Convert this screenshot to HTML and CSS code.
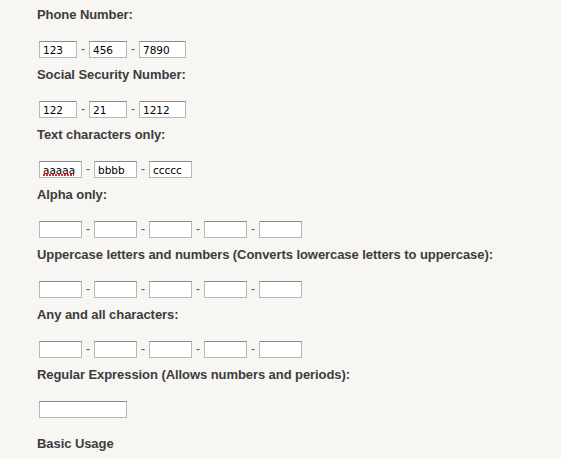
FILE: index.html
```html
<!DOCTYPE html>
<html>
<head>
<meta charset="utf-8">
<link rel="stylesheet" href="styles.css">
</head>
<body>
<div class="page">
  <div class="field">
    <label class="label">Phone Number:</label>
    <div class="row">
      <input class="box w38" value="123"><span class="dash">-</span><input class="box w38" value="456"><span class="dash">-</span><input class="box w47" value="7890">
    </div>
  </div>
  <div class="field">
    <label class="label">Social Security Number:</label>
    <div class="row">
      <input class="box w38" value="122"><span class="dash">-</span><input class="box w38" value="21"><span class="dash">-</span><input class="box w47" value="1212">
    </div>
  </div>
  <div class="field">
    <label class="label">Text characters only:</label>
    <div class="row">
      <input class="box w43 misspelt" value="aaaaa"><span class="dash">-</span><input class="box w43" value="bbbb"><span class="dash">-</span><input class="box w43" value="ccccc">
    </div>
  </div>
  <div class="field">
    <label class="label">Alpha only:</label>
    <div class="row">
      <input class="box w43"><span class="dash">-</span><input class="box w43"><span class="dash">-</span><input class="box w43"><span class="dash">-</span><input class="box w43"><span class="dash">-</span><input class="box w43">
    </div>
  </div>
  <div class="field">
    <label class="label">Uppercase letters and numbers (Converts lowercase letters to uppercase):</label>
    <div class="row">
      <input class="box w43"><span class="dash">-</span><input class="box w43"><span class="dash">-</span><input class="box w43"><span class="dash">-</span><input class="box w43"><span class="dash">-</span><input class="box w43">
    </div>
  </div>
  <div class="field">
    <label class="label">Any and all characters:</label>
    <div class="row">
      <input class="box w43"><span class="dash">-</span><input class="box w43"><span class="dash">-</span><input class="box w43"><span class="dash">-</span><input class="box w43"><span class="dash">-</span><input class="box w43">
    </div>
  </div>
  <div class="field">
    <label class="label">Regular Expression (Allows numbers and periods):</label>
    <div class="row">
      <input class="box w88">
    </div>
  </div>
  <h3 class="heading">Basic Usage</h3>
</div>
</body>
</html>
```

FILE: styles.css
```css
html, body {
  margin: 0;
  padding: 0;
  background: #f7f6f3;
}

.page {
  padding: 7px 0 0 37px;
  display: flex;
  flex-direction: column;
  font-family: "Liberation Sans", Arial, Helvetica, sans-serif;
  color: #3c3c3c;
}

.field {
  display: flex;
  flex-direction: column;
  margin-bottom: 9px;
}

.label {
  display: block;
  font-size: 13px;
  font-weight: bold;
  line-height: 16px;
  height: 16px;
  margin-bottom: 18px;
  white-space: nowrap;
  letter-spacing: -0.07px;
}

.row {
  display: flex;
  align-items: center;
  height: 17px;
  margin-left: 2px;
}

.box {
  box-sizing: border-box;
  height: 17px;
  margin: 0;
  padding: 0 2px 0 3px;
  background-color: #fff;
  border: 1px solid #b8b8b8;
  border-top-color: #8a8a8a;
  border-radius: 0;
  font-family: "DejaVu Sans", "Liberation Sans", sans-serif;
  font-size: 10.5px;
  color: #000;
  outline: none;
}

.w38 { width: 38px; }
.w43 { width: 43px; }
.w47 { width: 47px; }
.w88 { width: 88px; }

.misspelt {
  background-image: repeating-linear-gradient(90deg, #e0262d 0 2px, transparent 2px 3px);
  background-size: 31px 2px;
  background-position: 3px 12px;
  background-repeat: no-repeat;
}

.dash {
  width: 12px;
  text-align: center;
  font-size: 12px;
  line-height: 17px;
  color: #555;
}

.heading {
  margin: 9px 0 0 0;
  font-size: 13px;
  font-weight: bold;
  line-height: 16px;
  letter-spacing: -0.07px;
}
```
